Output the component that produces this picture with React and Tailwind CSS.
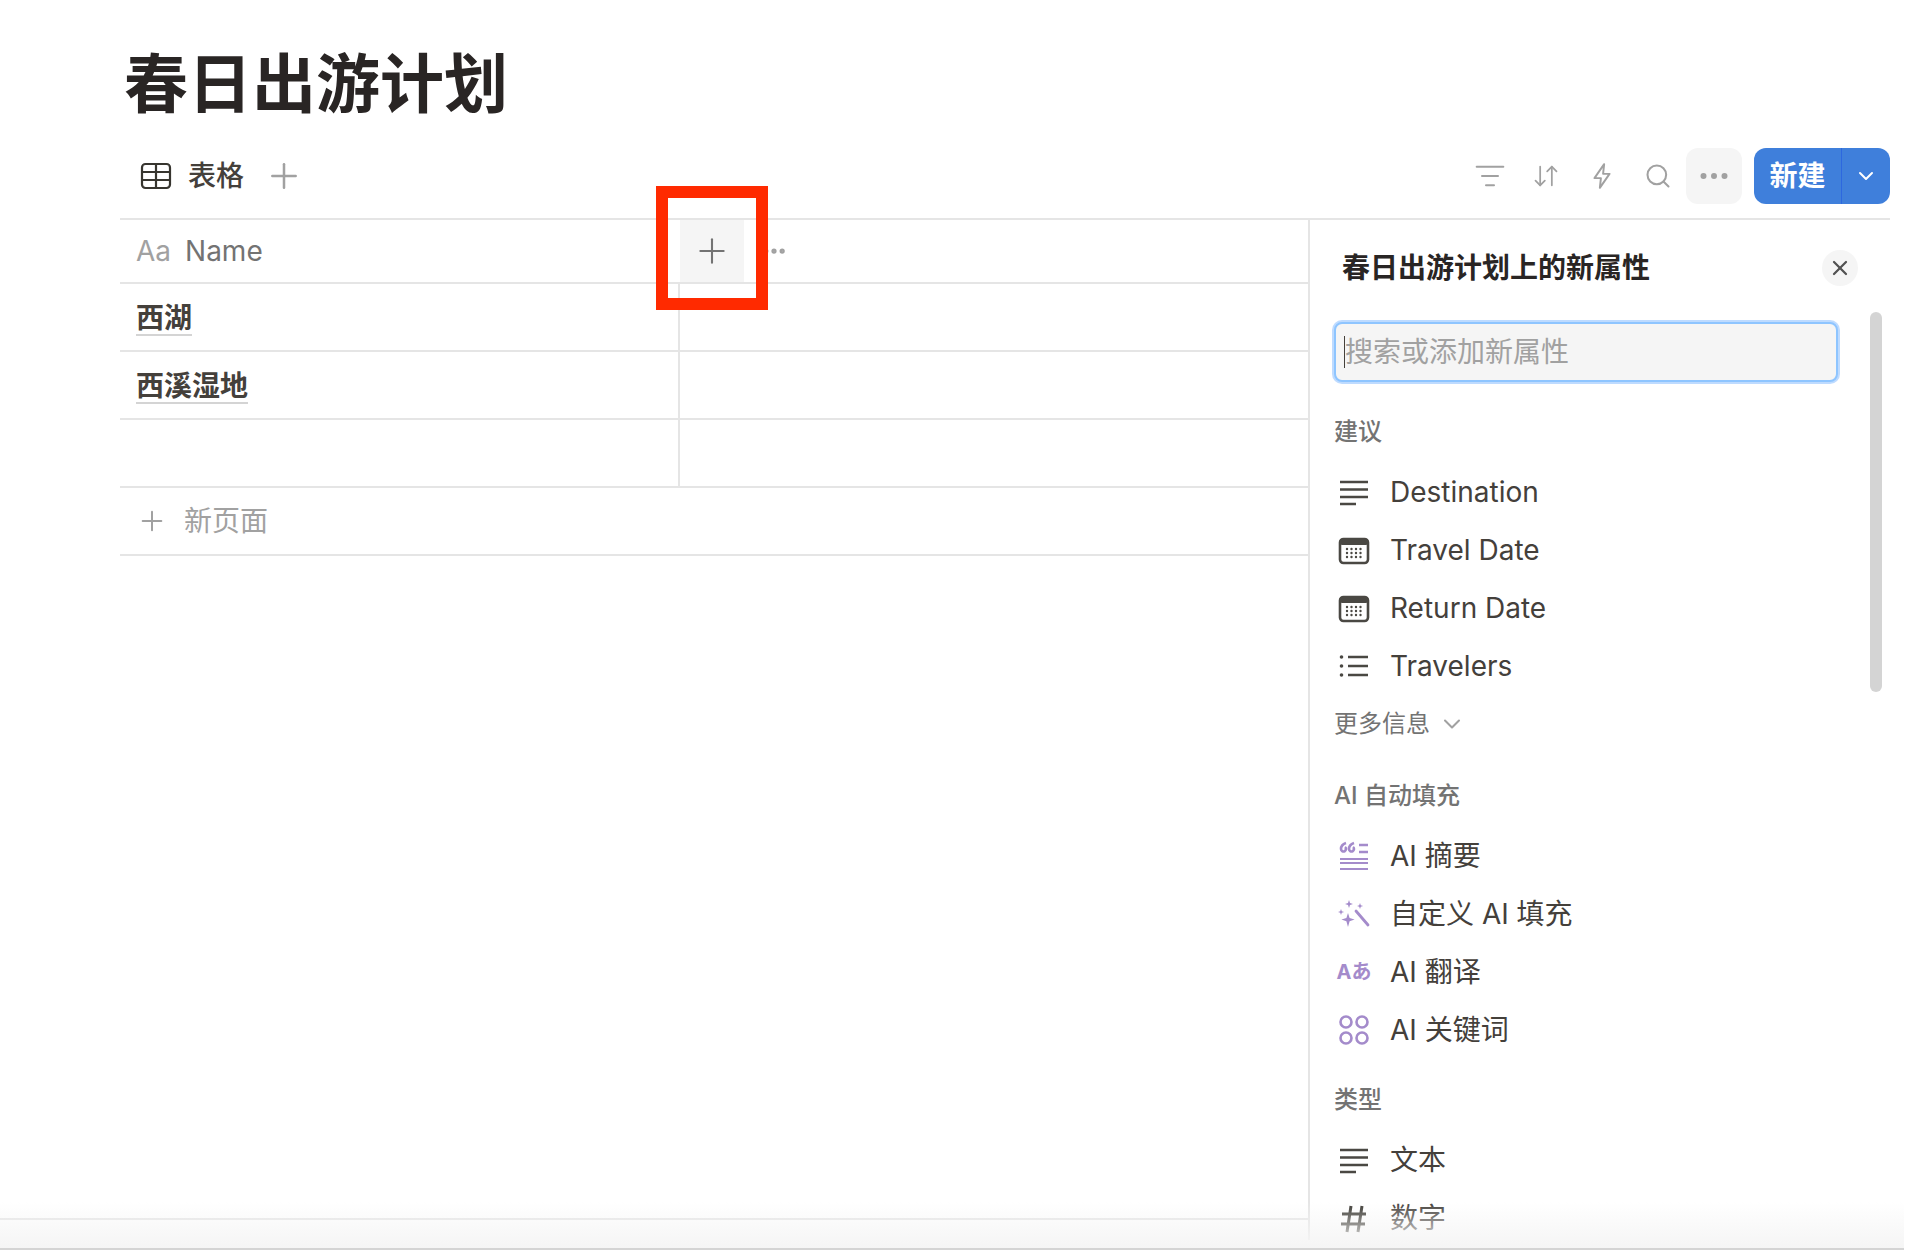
import React from "react";
import { ArrowDownUp, ChevronDown, Ellipsis, ListFilter, Plus, Search, X } from "lucide-react";

const purple = "#a48bcb";
const dark = "#4a4843";

const TextIcon = () => (
  <svg viewBox="0 0 32 32" className="size-8" stroke={dark} strokeWidth="2.6">
    <path d="M2 6h28M2 13.5h28M2 21h28M2 28h16" />
  </svg>
);

const CalendarIcon = () => (
  <svg viewBox="0 0 32 32" className="size-8">
    <rect x="2" y="5" width="28" height="24" rx="3.5" fill="none" stroke={dark} strokeWidth="2.6" />
    <rect x="2" y="5" width="28" height="6" rx="2" fill={dark} />
    {[9, 13.5, 18, 22.5].map((x) =>
      [15, 19, 23].map((y) => <circle key={`${x}-${y}`} cx={x} cy={y} r="1.2" fill={dark} />)
    )}
  </svg>
);

const ListIcon = () => (
  <svg viewBox="0 0 32 32" className="size-8" fill={dark}>
    <circle cx="3.5" cy="7" r="1.8" />
    <circle cx="3.5" cy="16" r="1.8" />
    <circle cx="3.5" cy="25" r="1.8" />
    <path d="M10 7h20M10 16h20M10 25h20" stroke={dark} strokeWidth="2.6" />
  </svg>
);

const SummaryIcon = () => (
  <svg viewBox="0 0 32 32" className="size-8" stroke={purple} fill="none">
    <path d="M2 19h28M2 23h28M2 29h28" strokeWidth="2" />
    <path d="M21 5h9M21 12h9" strokeWidth="2.4" />
    <path d="M8 3c-3 1-5 3-5 6a2.5 2.5 0 1 0 4-2M16 3c-3 1-5 3-5 6a2.5 2.5 0 1 0 4-2" strokeWidth="2.6" />
  </svg>
);

const WandIcon = () => (
  <svg viewBox="0 0 32 32" className="size-8" fill={purple}>
    <path d="M18 13l12 14" stroke={purple} strokeWidth="2.8" strokeLinecap="round" />
    <path d="M10 15l1.6 5 5 1.6-5 1.6L10 29l-1.6-5.8-5-1.6 5-1.6z" />
    <path d="M11 2l1 3 3 1-3 1-1 3-1-3-3-1 3-1z" />
    <path d="M3 11l.8 2.3 2.3.7-2.3.8L3 17l-.8-2.2L0 14l2.2-.7z" />
    <path d="M22 5l.8 2.3 2.3.7-2.3.8L22 11l-.8-2.2L19 8l2.2-.7z" />
  </svg>
);

const CirclesIcon = () => (
  <svg viewBox="0 0 32 32" className="size-8" fill="none" stroke={purple} strokeWidth="2.6">
    <circle cx="8" cy="8" r="5.5" />
    <circle cx="24" cy="8" r="5.5" />
    <circle cx="8" cy="24" r="5.5" />
    <circle cx="24" cy="24" r="5.5" />
  </svg>
);

const HashIcon = () => (
  <svg viewBox="0 0 32 32" className="size-8" fill="none" stroke="#37352f" strokeWidth="3">
    <path d="M13 4L9 30M24 4l-4 26M4 12h24M3 22h24" />
  </svg>
);

const TranslateIcon = () => (
  <span className="text-xl leading-none font-bold whitespace-nowrap text-[#a48bcb]">Aあ</span>
);

const TableIcon = () => (
  <svg viewBox="0 0 32 32" className="size-8" fill="none" stroke="#37352f" strokeWidth="2.2">
    <rect x="2" y="4" width="28" height="24" rx="3.5" />
    <path d="M2 12h28M2 20h28M16 4v24" />
  </svg>
);

const BoltIcon = () => (
  <svg viewBox="0 0 18 26" className="h-7 w-5" fill="none" stroke="currentColor" strokeWidth="1.8" strokeLinejoin="round">
    <path d="M11 2L2 15h6l-1 9 9-13h-6z" />
  </svg>
);

const Item = ({ icon: Icon, label }) => (
  <div className="flex h-14 items-center gap-5 pl-1 text-stone-700">
    <div className="flex size-8 shrink-0 items-center justify-center">
      <Icon />
    </div>
    <span>{label}</span>
  </div>
);

const SectionLabel = ({ children }) => (
  <div className="flex h-9 items-center text-2xl font-medium text-neutral-500">{children}</div>
);

const ItemList = ({ items }) => (
  <div className="mt-3.5 flex flex-col gap-0.5">
    {items.map((item) => (
      <Item key={item.label} icon={item.icon} label={item.label} />
    ))}
  </div>
);

const suggested = [
  { icon: TextIcon, label: "Destination" },
  { icon: CalendarIcon, label: "Travel Date" },
  { icon: CalendarIcon, label: "Return Date" },
  { icon: ListIcon, label: "Travelers" },
];

const aiFill = [
  { icon: SummaryIcon, label: "AI 摘要" },
  { icon: WandIcon, label: "自定义 AI 填充" },
  { icon: TranslateIcon, label: "AI 翻译" },
  { icon: CirclesIcon, label: "AI 关键词" },
];

const types = [
  { icon: TextIcon, label: "文本" },
  { icon: HashIcon, label: "数字" },
];

const Row = ({ name }) => (
  <div className="flex h-17 border-b-2 border-neutral-200">
    <div className="flex w-140 items-center border-r-2 border-neutral-200 pt-1 pl-4">
      {name && (
        <span className="border-b-2 border-neutral-300 leading-8 font-bold text-stone-700">
          {name}
        </span>
      )}
    </div>
  </div>
);

export default function App() {
  return (
    <div className="relative flex h-screen flex-col overflow-hidden bg-white font-['Inter','Noto_Sans_CJK_SC',sans-serif] text-[28px]">
      {/* Title and view tabs */}
      <div className="pt-13 pr-6 pl-30">
        <h1 className="ml-1 text-[64px] leading-none font-bold text-stone-800">春日出游计划</h1>
        <div className="mt-8 flex items-start justify-between border-b-2 border-neutral-200 pb-3.5">
          <div className="flex h-14 items-center pl-5">
            <TableIcon />
            <span className="ml-4 font-medium text-stone-700">表格</span>
            <Plus className="ml-5 size-10 text-neutral-400" strokeWidth={1.5} />
          </div>
          <div className="flex items-center gap-3">
            <div className="flex items-center text-neutral-400">
              <div className="flex size-14 items-center justify-center">
                <ListFilter className="size-8" strokeWidth={1.5} />
              </div>
              <div className="flex size-14 items-center justify-center">
                <ArrowDownUp className="size-7" strokeWidth={1.5} />
              </div>
              <div className="flex size-14 items-center justify-center">
                <BoltIcon />
              </div>
              <div className="flex size-14 items-center justify-center">
                <Search className="size-7" strokeWidth={1.75} />
              </div>
              <div className="flex size-14 items-center justify-center rounded-xl bg-neutral-100">
                <Ellipsis className="size-9" strokeWidth={2} />
              </div>
            </div>
            <div className="flex h-14 w-34 items-center rounded-xl bg-[#3f7fdb] text-white">
              <div className="flex h-full w-22 items-center justify-center border-r border-blue-700/40 font-bold">
                新建
              </div>
              <div className="flex flex-1 items-center justify-center">
                <ChevronDown className="size-6" strokeWidth={2} />
              </div>
            </div>
          </div>
        </div>
      </div>

      <div className="flex min-h-0 flex-1">
        {/* Table */}
        <div className="flex flex-1 flex-col">
          <div className="pl-30">
            <div className="relative flex h-16 border-b-2 border-neutral-200">
              <div className="flex w-140 items-center gap-3.5 pl-4 text-neutral-500">
                <span className="text-neutral-400">Aa</span>
                <span>Name</span>
              </div>
              <div className="flex w-16 items-center justify-center bg-neutral-100">
                <Plus className="size-10 text-neutral-500" strokeWidth={1.25} />
              </div>
              <div className="ml-4 flex items-center">
                <Ellipsis className="size-7 text-neutral-400" strokeWidth={2.5} />
              </div>
              {/* annotation drawn over the screenshot */}
              <div className="absolute -top-8.5 left-134 h-31 w-28 border-12 border-[#ff2a00]" />
            </div>
            <Row name="西湖" />
            <Row name="西溪湿地" />
            <Row />
            <div className="flex h-17 items-center gap-4 border-b-2 border-neutral-200 pl-4 text-neutral-400">
              <Plus className="size-8" strokeWidth={1.5} />
              <span>新页面</span>
            </div>
          </div>
          <div className="mt-auto h-8 border-t-2 border-neutral-200" />
        </div>

        {/* New property panel */}
        <div className="relative mb-2.5 w-[606px] shrink-0 overflow-hidden border-l-2 border-neutral-200 pt-6 pr-14 pl-6">
          <div className="flex h-12 items-center justify-between pl-2">
            <span className="font-bold text-stone-800">春日出游计划上的新属性</span>
            <button className="flex size-9 items-center justify-center rounded-full bg-neutral-100 text-neutral-600">
              <X className="size-6" strokeWidth={2.25} />
            </button>
          </div>

          <div className="mt-7.5 mr-5 flex h-15 items-center rounded-lg border-2 border-blue-300 bg-neutral-100 pl-2 text-neutral-400 ring-2 ring-blue-200">
            <span className="h-8 w-px shrink-0 bg-stone-700" />
            <span>搜索或添加新属性</span>
          </div>

          <div className="mt-8">
            <SectionLabel>建议</SectionLabel>
            <ItemList items={suggested} />
          </div>
          <div className="mt-3 flex h-9 items-center gap-2 text-2xl text-neutral-500">
            <span>更多信息</span>
            <ChevronDown className="size-7 text-neutral-400" strokeWidth={1.75} />
          </div>

          <div className="mt-9">
            <SectionLabel>AI 自动填充</SectionLabel>
            <ItemList items={aiFill} />
          </div>

          <div className="mt-6">
            <SectionLabel>类型</SectionLabel>
            <ItemList items={types} />
          </div>

          <div className="absolute top-23 right-8 h-95 w-3 rounded-full bg-neutral-300" />
        </div>
      </div>

      {/* bottom fade of the window */}
      <div className="pointer-events-none absolute right-2.5 bottom-0 left-0 h-12 border-b-2 border-neutral-300 bg-linear-to-b from-transparent to-neutral-100" />
    </div>
  );
}
